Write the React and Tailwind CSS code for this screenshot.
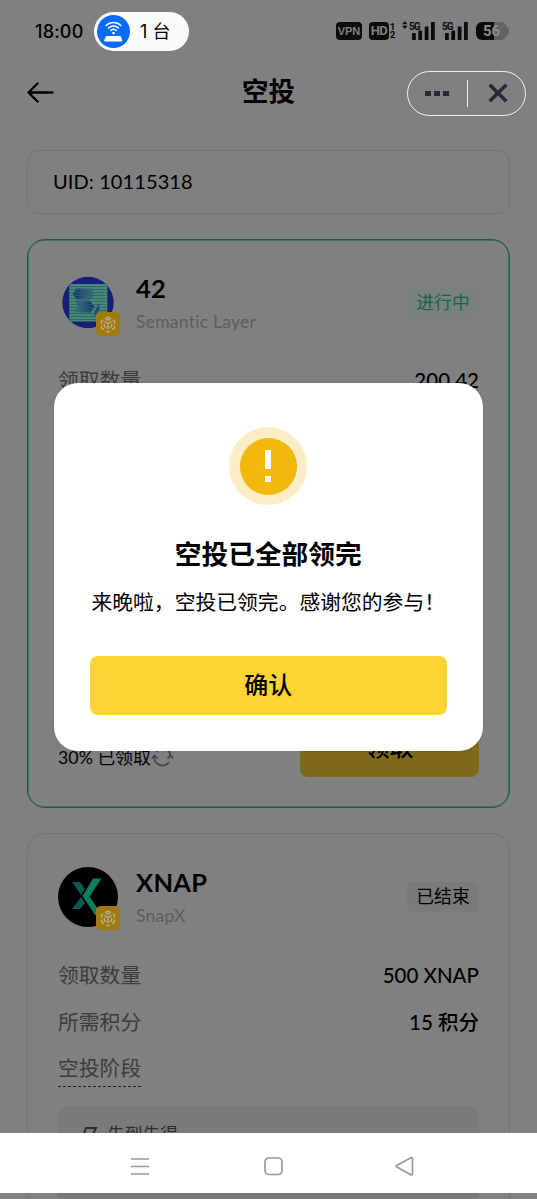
const stripes = Array.from({ length: 12 }, (_, i) => i);

function BnbBadge() {
  return (
    <span className="absolute left-[38px] top-[39px] flex h-6 w-6 items-center justify-center rounded-[5px] bg-[#a07a0c]">
      <svg width="16" height="17" viewBox="0 0 16 17" fill="none" stroke="#b8ae92" strokeWidth="1.4">
        <path d="M4.800 2.800 8 1l3.200 1.800M12.800 3.800l1.700 1v3M14.500 9.500v2.700l-2.500 1.500M9.800 15 8 16l-1.800-1M4 13.700l-2.500-1.500V9.500M1.500 7.800v-3l1.700-1" />
        <path d="M4.300 5.500 8 7.700l3.700-2.200M8 7.700v5.600M4.300 7.700v2.800l2 1.200M11.700 7.700v2.800l-2 1.200M6.200 4.300 8 3.300l1.800 1" />
      </svg>
    </span>
  );
}

function SemanticLogo() {
  return (
    <svg width="60" height="60" viewBox="0 0 60 60">
      <defs>
        <linearGradient id="fadeRight">
          <stop offset="0" stopColor="#1b2b7a" />
          <stop offset="1" stopColor="#1b2b7a" stopOpacity=".15" />
        </linearGradient>
        <linearGradient id="fadeLeft">
          <stop offset="0" stopColor="#1b2b7a" stopOpacity=".15" />
          <stop offset="1" stopColor="#1b2b7a" />
        </linearGradient>
      </defs>
      <circle cx="30" cy="29.500" r="25.700" fill="#172079" />
      <rect x="11.300" y="11" width="38" height="37.500" rx="2.500" fill="#468a72" />
      <path d="M18.500 15.500H34l3 5.500-3 5.500H18.500L15 21z" fill="url(#fadeRight)" />
      <path d="M16 27.500h15.500l5 6-4 6H16l4-6z" fill="url(#fadeLeft)" />
      <path d="M41.500 29.500 41 37l-5 7 1-6z" fill="#1b2b7a" opacity=".8" />
      {stripes.map((i) => (
        <path key={i} d={`M12 ${13.5 + i * 3}h36.500`} stroke="#2b5f72" strokeWidth=".8" />
      ))}
    </svg>
  );
}

function XnapLogo() {
  return (
    <svg width="60" height="60" viewBox="0 0 60 60">
      <circle cx="30" cy="30" r="30" fill="#000" />
      <path d="M14 15h8l5 7-4 6zM14 42l9-12 4 6-5 6z" fill="#0c5a50" />
      <path d="M35 11.500h8.500L31.500 29.500 44 48h-7L24.500 29z" fill="#0b8061" />
    </svg>
  );
}

function TokenHeader({ logo, name, project, status, active }) {
  return (
    <div className="flex h-[63px]">
      <div className="relative h-[60px] w-[60px] shrink-0">
        {logo}
        <BnbBadge />
      </div>
      <div className="-mt-px ml-[18px] flex-1">
        <h2 className="h-8 text-[25.500px] font-bold leading-8 tracking-[0.3px] text-black">{name}</h2>
        <p className="mt-0.5 text-[17.500px] leading-8 tracking-[0.250px] text-[#5c5c5c]">{project}</p>
      </div>
      <span
        className={`mt-[15px] flex h-[30px] w-[72px] items-center justify-center rounded-[5px] pb-0.5 text-[17.800px] ${
          active ? "bg-[#788080] text-[#176346]" : "bg-[#7a7a7a] text-black"
        }`}
      >
        {status}
      </span>
    </div>
  );
}

function InfoRow({ label, value }) {
  return (
    <div className="flex h-[47px] items-center justify-between">
      <span className="text-[20.800px] text-[#3c3c3c]">{label}</span>
      <span className="pt-0.5 text-[20.500px] font-medium text-black">{value}</span>
    </div>
  );
}

function Signal() {
  return (
    <svg width="26" height="20" viewBox="0 0 26 20" fill="#0b0b0b">
      <text x="0" y="8.500" fontSize="10" fontWeight="700" fontFamily="Roboto, sans-serif" textLength="11.500">5G</text>
      <rect x="3" y="12" width="3.800" height="7" rx=".5" />
      <rect x="9.300" y="9.500" width="3.800" height="9.500" rx=".5" />
      <rect x="15.700" y="5.500" width="3.800" height="13.500" rx=".5" />
      <rect x="22" y="1" width="3.800" height="18" rx=".5" />
    </svg>
  );
}

function StatusBar() {
  return (
    <div className="flex h-[62px] items-center pl-[35px] pr-7 text-black">
      <span className="w-[59px] font-['Inter','Noto_Sans_CJK_SC',sans-serif] text-[18px] font-medium tracking-[0.2px]">18:00</span>
      <div className="flex h-[39px] w-[95px] items-center rounded-full bg-[#fafafa] pl-[3px]">
        <svg width="33" height="33" viewBox="0 0 33 33" fill="none" stroke="#fff" strokeWidth="1.500" strokeLinecap="round">
          <circle cx="16.500" cy="16.500" r="16.500" fill="#0869fb" stroke="none" />
          <path d="M9.200 10.500a10.500 10.500 0 0 1 14.600 0M11.500 13a7.200 7.200 0 0 1 10 0M13.800 15.500a4 4 0 0 1 5.400 0" />
          <circle cx="16.500" cy="18" r="1.300" fill="#fff" stroke="none" />
          <path d="M9.500 21.500h14l1.500 4.500H8z" fill="#fff" strokeLinejoin="round" strokeWidth="1" />
        </svg>
        <span className="ml-2.5 whitespace-nowrap font-['Inter','Noto_Sans_CJK_SC',sans-serif] text-[18px]">1 台</span>
      </div>
      <div className="ml-auto flex items-center">
        <span className="flex h-[18px] w-[26px] items-center justify-center rounded-[4px] bg-[#0b0b0b] font-['Liberation_Sans',sans-serif] text-[11px] font-bold text-[#808080]">VPN</span>
        <span className="ml-[7px] flex h-[18px] w-5 items-center justify-center rounded-[4px] bg-[#0b0b0b] font-['Roboto',sans-serif] text-[13px] font-bold tracking-tighter text-[#808080]">HD</span>
        <span className="ml-px flex w-[6px] flex-col font-['Roboto',sans-serif] text-[9px] font-bold leading-[8.500px]">
          <span>1</span>
          <span>2</span>
        </span>
        <svg className="-mt-3 ml-[6px]" width="6" height="8" viewBox="0 0 6 8" fill="#0b0b0b">
          <path d="M0 3.300 2.800 0l2.800 3.300zM0 4.700h5.600L2.800 8z" />
        </svg>
        <span className="ml-px"><Signal /></span>
        <span className="ml-[7px]"><Signal /></span>
        <span className="ml-2 flex h-[18px] w-[33px] items-center">
          <span className="flex h-[18px] w-[31px] items-center justify-center rounded-[6px] bg-linear-to-r from-[#0b0b0b] from-58% to-[#626262] to-58% font-['Roboto',sans-serif] text-[15px] font-bold text-[#8e8e8e]">56</span>
          <span className="h-2 w-[2px] rounded-r bg-[#626262]" />
        </span>
      </div>
    </div>
  );
}

function NavHeader() {
  return (
    <header className="flex h-[62px] items-center justify-between px-[11px]">
      <button className="flex w-[119px] items-center pl-4">
        <svg width="28" height="22" viewBox="0 0 28 22" fill="none" stroke="#000" strokeWidth="2.400" strokeLinecap="round" strokeLinejoin="round">
          <path d="M25.500 10.500H1.500M10.500 1.500l-9 9 9 9" />
        </svg>
      </button>
      <h1 className="-mt-1 text-[26.500px] font-bold leading-none text-black">空投</h1>
      <div className="flex h-[45px] w-[119px] items-center rounded-full border border-[#f2f2f2] pl-[17px]">
        <span className="flex gap-[3.500px]">
          <i className="h-[5px] w-[5.500px] bg-[#242b38]" />
          <i className="h-[5px] w-[5.500px] bg-[#242b38]" />
          <i className="h-[5px] w-[5.500px] bg-[#242b38]" />
        </span>
        <span className="ml-[18px] h-[27px] w-[1.500px] bg-[#f2f2f2]" />
        <svg className="ml-[20px]" width="20" height="20" viewBox="0 0 20 20" stroke="#242b38" strokeWidth="3.600">
          <path d="M1.700 1.700 18.300 18.300M18.300 1.700 1.700 18.300" />
        </svg>
      </div>
    </header>
  );
}

function SoldOutDialog() {
  return (
    <div className="absolute left-[53.500px] top-[382.500px] flex h-[368px] w-[429.500px] flex-col items-center rounded-[24px] bg-white px-9 pt-[44.500px] text-black shadow-[0_0_3px_rgba(0,0,0,0.15)]">
      <div className="flex h-[78px] w-[78px] shrink-0 items-center justify-center rounded-full bg-[#fcedc4]">
        <div className="flex h-[57px] w-[57px] flex-col items-center justify-center gap-[6.500px] rounded-full bg-[#f0b90b]">
          <span className="h-[19px] w-[6px] bg-white" />
          <span className="h-[6px] w-[6px] bg-white" />
        </div>
      </div>
      <h2 className="mt-[29px] text-[26.700px] font-bold leading-10">空投已全部领完</h2>
      <p className="mt-3 whitespace-nowrap text-[20.800px] leading-8">来晚啦，空投已领完。感谢您的参与！</p>
      <button className="mt-[38px] h-[59px] w-full rounded-lg bg-[#fcd535] pb-0.5 text-[24px] font-medium">确认</button>
    </div>
  );
}

function SystemNav() {
  return (
    <nav className="absolute inset-x-0 bottom-1.5 flex h-[60px] items-center bg-white pl-[130px] pt-[7px]">
      <svg width="288" height="22" viewBox="0 0 288 22" fill="none" stroke="#999" strokeWidth="1.700" strokeLinejoin="round">
        <path d="M1 3h18M1 10.500h18M1 18h18" />
        <rect x="135" y="2" width="17" height="16.500" rx="4" />
        <path d="M266.700 9.600 281 1.800q1.500-.5 1.500 1v15q0 1.500-1.500 1l-14.300-7.900q-1-.7 0-1.300z" />
      </svg>
    </nav>
  );
}

export default function App() {
  return (
    <div className="relative h-[1199px] w-[537px] overflow-hidden bg-[#808080] font-['Lato','Noto_Sans_CJK_SC',sans-serif]">
      <StatusBar />
      <NavHeader />
      <main className="px-[27px] pt-[26px]">
        <div className="flex h-16 items-center rounded-xl border border-[#747474] px-[25px] pb-0.5 text-[20px] tracking-[0.1px] text-black">
          UID: 10115318
        </div>

        <section className="mt-[25px] flex h-[569px] flex-col rounded-[18px] border border-[#155f43] px-[30px] pb-[30px] pt-[33px] shadow-[inset_0_0_0_0.5px_#155f43]">
          <TokenHeader logo={<SemanticLogo />} name="42" project="Semantic Layer" status="进行中" active />
          <div className="mt-5">
            <InfoRow label="领取数量" value="200 42" />
          </div>
          <div className="mt-auto flex items-end justify-between">
            <div className="flex h-10 items-center text-[17.800px] text-black">
              <span>30% 已领取</span>
              <svg width="23" height="20" viewBox="0 0 23 20" fill="none" stroke="#444" strokeWidth="1.800">
                <path d="M19.500 9A8 8 0 0 0 5 5M3.500 9a8 8 0 0 0 14.500 6" />
                <path d="M.8 11.500 3.500 8.500l3 2.800M16.500 11.300l3-2.800 2.800 3" />
              </svg>
            </div>
            <button className="h-[59px] w-[179px] rounded-lg bg-[#7e6a1a] pb-0.5 text-[24px] font-medium text-black">领取</button>
          </div>
        </section>

        <section className="mt-[25px] h-[500px] rounded-[18px] border border-[#747474] px-[30px] pt-[33px]">
          <TokenHeader logo={<XnapLogo />} name="XNAP" project="SnapX" status="已结束" />
          <div className="mt-[21px]">
            <InfoRow label="领取数量" value="500 XNAP" />
            <InfoRow label="所需积分" value="15 积分" />
          </div>
          <div className="mt-[5px] flex w-[84px] flex-col">
            <span className="whitespace-nowrap text-[20.800px] leading-[36px] text-[#3c3c3c]">空投阶段</span>
            <span className="h-px bg-[repeating-linear-gradient(90deg,#222_0_3px,transparent_3px_5px)]" />
          </div>
          <div className="mt-[19px] flex h-[150px] items-start rounded-xl bg-[#7a7a7a] px-[22px] pt-3">
            <svg className="mt-2" width="19" height="24" viewBox="0 0 19 24" fill="none" stroke="#2c2c2c" strokeWidth="2">
              <path d="M6 2h10l-4 8h4L4 22l3-9H2z" />
            </svg>
            <span className="ml-2 text-[17.800px] leading-8 text-[#2c2c2c]">先到先得</span>
          </div>
        </section>
      </main>
      <SoldOutDialog />
      <SystemNav />
    </div>
  );
}
